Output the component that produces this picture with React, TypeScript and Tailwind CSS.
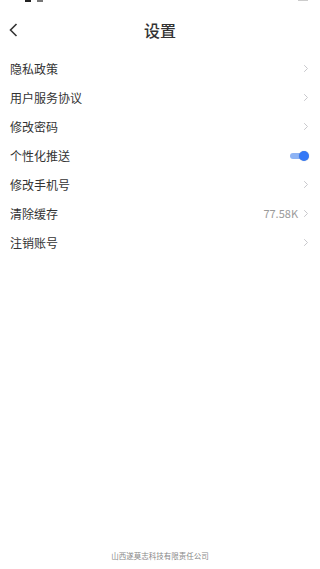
import React from "react";

const font = { fontFamily: '"Noto Sans CJK SC", "Noto Sans", sans-serif' };

function Chevron() {
  return (
    <svg width="6" height="9" viewBox="0 0 6 9" fill="none" className="ml-[5px]">
      <path d="M1.2 1.2l3.3 3.3-3.3 3.3" stroke="#c8c8cc" strokeWidth="1" />
    </svg>
  );
}

function Row({ label, value, toggle }: { label: string; value?: string; toggle?: boolean }) {
  return (
    <div className="flex h-[29px] items-center justify-between pl-[10px] pr-[11px]">
      <span className="text-[12px] text-[#333333] leading-none">{label}</span>
      {toggle ? (
        <div className="relative h-[10px] w-[19px]">
          <div className="absolute left-0 top-[2px] h-[6px] w-[15px] rounded-full bg-[#8db3f4]" />
          <div className="absolute right-0 top-0 h-[10px] w-[10px] rounded-full bg-[#3478f6] shadow-[0_0_1px_rgba(0,0,0,0.3)]" />
        </div>
      ) : (
        <div className="flex items-center">
          {value && <span className="text-[11px] text-[#9a9a9a] leading-none">{value}</span>}
          <Chevron />
        </div>
      )}
    </div>
  );
}

export default function App() {
  return (
    <div className="flex min-h-[569px] flex-col bg-white" style={font}>
      <div className="h-[10px] relative">
        <div className="absolute left-[25px] top-0 h-[2px] w-[6px] bg-[#222]" />
        <div className="absolute left-[37px] top-0 h-[2px] w-[6px] bg-[#777]" />
        <div className="absolute right-[12px] top-0 h-[1px] w-[10px] bg-[#ccc]" />
      </div>
      <div className="relative flex h-[40px] items-center justify-center">
        <svg width="9" height="14" viewBox="0 0 9 14" fill="none" className="absolute left-[9px] top-[13px]">
          <path d="M7.5 1L1.5 7l6 6" stroke="#333" strokeWidth="1.6" />
        </svg>
        <span className="text-[16px] font-medium text-[#333333] leading-none">设置</span>
      </div>
      <div className="pt-[4px]">
        <Row label="隐私政策" />
        <Row label="用户服务协议" />
        <Row label="修改密码" />
        <Row label="个性化推送" toggle />
        <Row label="修改手机号" />
        <Row label="清除缓存" value="77.58K" />
        <Row label="注销账号" />
      </div>
      <div className="mt-auto flex justify-center pb-[10px]">
        <span className="text-[7.5px] text-[#888888] leading-none">山西遂莫志科技有限责任公司</span>
      </div>
    </div>
  );
}
